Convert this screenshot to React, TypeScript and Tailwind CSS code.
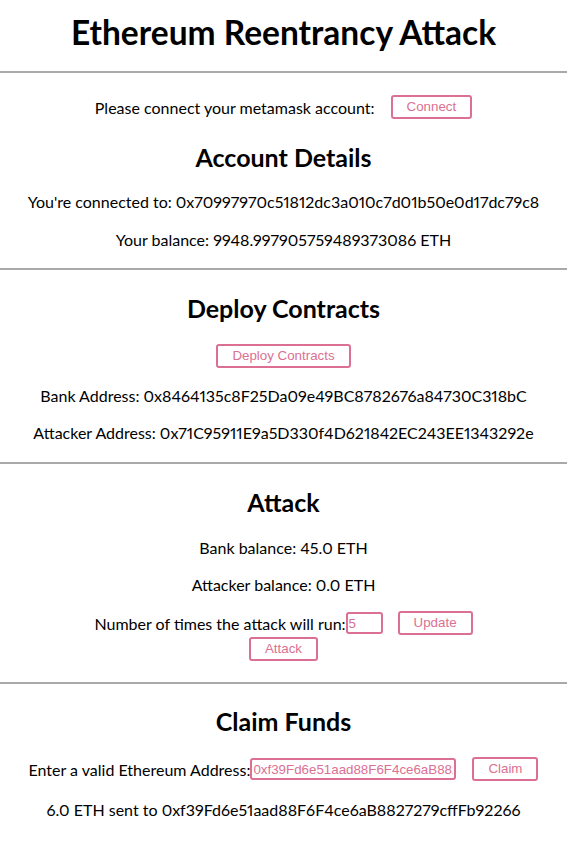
import { useState } from "react";

const btn =
  "h-[24px] px-[14px] border-2 border-[#db7093] rounded-[3px] bg-white text-[#db7093] text-[13.33px] font-['Liberation_Sans',Arial,sans-serif] leading-none";

const inp =
  "h-[22px] px-[1px] border-2 border-[#db7093] rounded-[3px] bg-white text-[#db7093] text-[13.33px] font-['Liberation_Sans',Arial,sans-serif] outline-0";

const Hr = () => <div className="h-[2px] w-full bg-[#a9a9a9]" />;

const H2 = ({ children, top }: { children: string; top: string }) => (
  <h2 className={`text-[25px] font-bold leading-[32px] ${top}`}>{children}</h2>
);

const P = ({ children, top }: { children: React.ReactNode; top: string }) => (
  <p className={`text-[16px] leading-[21px] ${top}`}>{children}</p>
);

export default function App() {
  const [runs, setRuns] = useState("5");
  const [addr, setAddr] = useState("0xf39Fd6e51aad88F6F4ce6aB8827279cffFb92266");

  return (
    <div className="w-[567px] min-h-[860px] bg-white text-black text-center proportional-nums font-['Lato','Noto_Sans',sans-serif]">
      <h1 className="pt-[11px] text-[33.5px] font-bold leading-[42px]">
        Ethereum Reentrancy Attack
      </h1>
      <div className="mt-[18px]">
        <Hr />
      </div>

      <section className="flex flex-col items-center pb-[18px]">
        <div className="mt-[22px] flex items-center">
          <span className="text-[16px] leading-[21px]">
            Please connect your metamask account:
          </span>
          <button className={`${btn} ml-[16px]`}>Connect</button>
        </div>
        <H2 top="mt-[22px]">Account Details</H2>
        <P top="mt-[18px]">
          You're connected to: 0x70997970c51812dc3a010c7d01b50e0d17dc79c8
        </P>
        <P top="mt-[17px]">Your balance: 9948.997905759489373086 ETH</P>
      </section>
      <Hr />

      <section className="flex flex-col items-center pb-[19px]">
        <H2 top="mt-[22px]">Deploy Contracts</H2>
        <button className={`${btn} mt-[20px]`}>Deploy Contracts</button>
        <P top="mt-[17px]">
          Bank Address: 0x8464135c8F25Da09e49BC8782676a84730C318bC
        </P>
        <P top="mt-[16px]">
          Attacker Address: 0x71C95911E9a5D330f4D621842EC243EE1343292e
        </P>
      </section>
      <Hr />

      <section className="flex flex-col items-center pb-[21px]">
        <H2 top="mt-[22px]">Attack</H2>
        <P top="mt-[19px]">Bank balance: 45.0 ETH</P>
        <P top="mt-[16px]">Attacker balance: 0.0 ETH</P>
        <div className="mt-[16px] flex items-center">
          <span className="text-[16px] leading-[21px]">
            Number of times the attack will run:
          </span>
          <input
            className={`${inp} w-[37px]`}
            value={runs}
            onChange={(e) => setRuns(e.target.value)}
          />
          <button className={`${btn} ml-[15px]`}>Update</button>
        </div>
        <button className={`${btn} mt-[2px]`}>Attack</button>
      </section>
      <Hr />

      <section className="flex flex-col items-center pb-[20px]">
        <H2 top="mt-[21px]">Claim Funds</H2>
        <div className="mt-[20px] flex items-center">
          <span className="text-[16px] leading-[21px]">
            Enter a valid Ethereum Address:
          </span>
          <input
            className={`${inp} w-[206px]`}
            value={addr}
            onChange={(e) => setAddr(e.target.value)}
          />
          <button className={`${btn} ml-[16px]`}>Claim</button>
        </div>
        <P top="mt-[18px]">
          6.0 ETH sent to 0xf39Fd6e51aad88F6F4ce6aB8827279cffFb92266
        </P>
      </section>
    </div>
  );
}
